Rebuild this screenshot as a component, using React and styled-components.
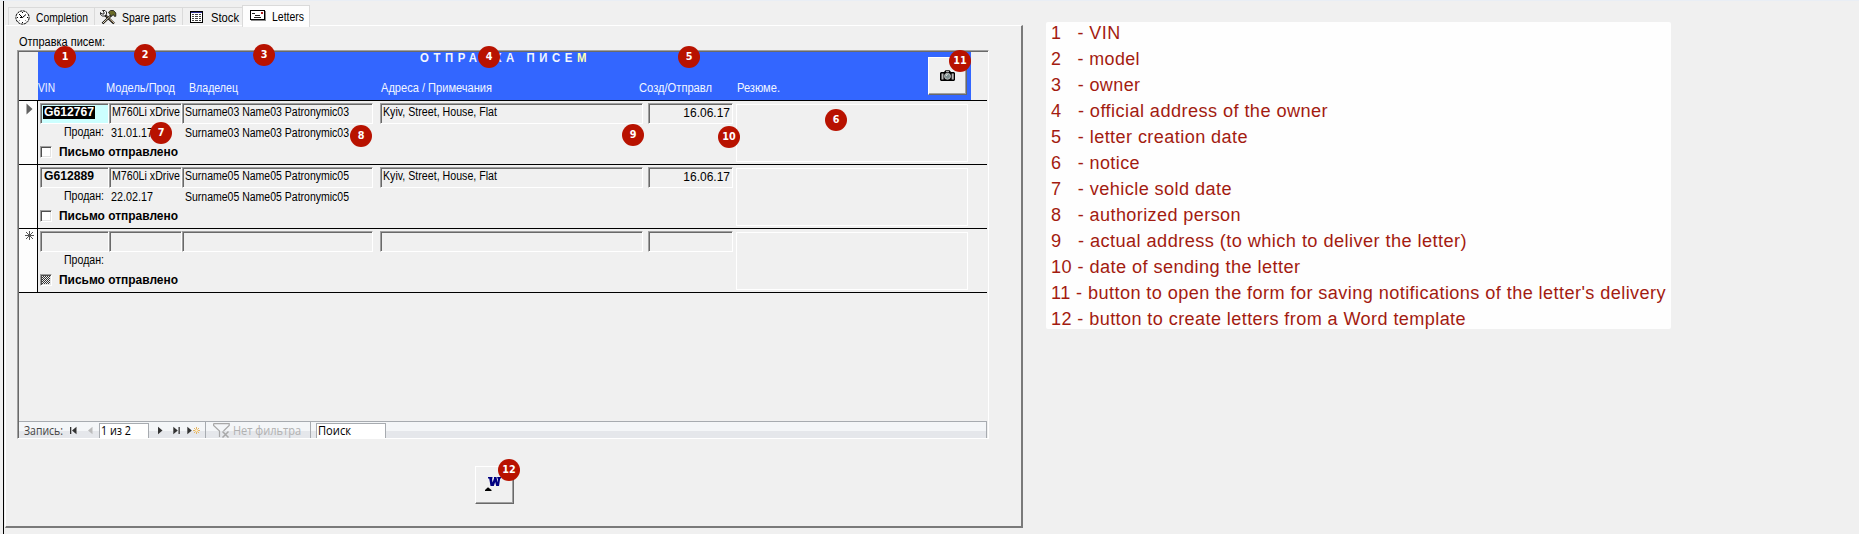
import React, { useLayoutEffect, useRef, useState } from "react";
import styled, { createGlobalStyle, css } from "styled-components";

const Global = createGlobalStyle`
  * { box-sizing: border-box; }
  body { margin: 0; background: #f0f0f0; overflow: hidden; }
  svg { display: block; flex: none; }
`;

const Page = styled.div`
  position: relative;
  width: 1859px;
  height: 534px;
  display: flex;
  align-items: flex-start;
  background: #f0f0f0;
  border-top: 1px solid #e9eef5;
  font: 12.5px/16px "Liberation Sans", Arial, sans-serif;
  color: #000;
  overflow: hidden;
`;

const FormWindow = styled.div`
  width: 1023px;
  height: 533px;
  margin-left: 3px;
  border-left: 1px solid #000;
  padding-left: 1px;
`;

/* Text squeezed or stretched horizontally to an exact width */
const FitBox = styled.span`
  display: block;
  flex: none;
  width: ${(p) => p.$width}px;
  margin-left: ${(p) => p.$left || 0}px;
  margin-top: ${(p) => p.$top || 0}px;
  white-space: pre;
`;
const FitInner = styled.span`
  display: inline-block;
  vertical-align: top;
  transform-origin: 0 50%;
`;

function Fit({ width, left, top, className, children }) {
  const ref = useRef(null);
  const [scale, setScale] = useState(1);
  useLayoutEffect(() => {
    const natural = ref.current.getBoundingClientRect().width / scale;
    if (natural) setScale(width / natural);
  }, [width]);
  return (
    <FitBox $width={width} $left={left} $top={top} className={className}>
      <FitInner ref={ref} style={{ transform: `scaleX(${scale})` }}>
        {children}
      </FitInner>
    </FitBox>
  );
}

const TabStrip = styled.div`
  display: flex;
  align-items: flex-end;
  height: 24px;
  padding-left: 3px;
`;
const Tab = styled.div`
  display: flex;
  width: ${(p) => p.$width}px;
  height: 18px;
  padding: 2px 0 0 ${(p) => p.$pad}px;
  border-left: 1px solid #dadada;
  border-top: 1px solid #dadada;
  ${(p) =>
    p.$active &&
    css`
      position: relative;
      height: 22px;
      margin-bottom: -2px;
      padding-top: 3px;
      background: #fdfdfd;
      border-right: 1px solid #dadada;
    `}
`;

const Panel = styled.div`
  width: 1018px;
  height: 503px;
  border: 1px solid #fff;
  border-right: 2px solid #7a7a7a;
  border-bottom: 2px solid #7a7a7a;
  padding: 8px 0 0 11px;
`;

const Subform = styled.div`
  width: 972px;
  height: 389px;
  display: flex;
  flex-direction: column;
  border: 1px solid #fff;
  border-top: 1px solid #a0a0a0;
  border-left: 1px solid #a0a0a0;
  box-shadow: inset 1px 1px 0 #696969;
  padding: 1px 0 0 1px;
`;

const HeaderRow = styled.div`
  display: flex;
  flex: none;
  height: 49px;
  padding-left: 19px;
  width: 968px;
  border-bottom: 1px solid #000;
`;
const HeaderBand = styled.div`
  display: flex;
  width: 933px;
  height: 48px;
  background: #3366ff;
  color: #f2f6ff;
`;
const HeaderLabels = styled.div`
  width: 890px;
`;
const Title = styled(Fit)`
  font-weight: bold;
  font-size: 12.5px;
  line-height: 16px;
  letter-spacing: 5px;
`;
const LastLetter = styled.span`
  color: #ffffb0;
`;
const LabelLine = styled.div`
  display: flex;
  margin-top: 14px;
`;

const raised = css`
  background: #f0f0f0;
  border-top: 1px solid #fff;
  border-left: 1px solid #fff;
  border-right: 1px solid #696969;
  border-bottom: 1px solid #696969;
  box-shadow: inset -1px -1px 0 #a0a0a0;
`;
const IconButton = styled.button`
  ${raised}
  display: grid;
  width: 39px;
  height: 38px;
  padding: ${(p) => p.$pad};
  margin: ${(p) => p.$margin};
`;

const Record = styled.div`
  display: flex;
  flex: none;
  width: 968px;
  height: 64px;
  border-bottom: 1px solid #000;
`;
const Selector = styled.div`
  width: 18px;
  padding: 2px 0 0 ${(p) => (p.$isNew ? 6 : 7)}px;
  background: #fdfdfd;
`;
const RecordBody = styled.div`
  display: grid;
  grid-template-columns: 69px 73px 198px 268px 88px 232px;
  grid-template-rows: 21px 20px 19px;
  width: 950px;
  border-left: 1px solid #000;
  padding: 2px 0 0 2px;
`;
const Field = styled.div`
  height: 21px;
  width: ${(p) => p.$width}px;
  border: 1px solid #fff;
  border-top-color: #a0a0a0;
  border-left-color: #a0a0a0;
  box-shadow: inset 1px 1px 0 #696969;
  background: ${(p) => (p.$current ? "#ccffff" : "transparent")};
  font-weight: ${(p) => (p.$bold ? "bold" : "normal")};
  padding: 0 0 0 2px;
`;
const Selected = styled.div`
  width: 52px;
  height: 13px;
  margin-top: 2px;
  background: #000;
  color: #fff;
  line-height: 12px;
`;
const DateText = styled.div`
  font-size: 12px;
  line-height: 18px;
  text-align: right;
  padding-right: 2px;
`;
const Notice = styled.div`
  grid-column: 6;
  grid-row: 1 / 4;
  height: 58px;
  margin-top: 1px;
  border: 1px solid #fff;
`;
const CheckLine = styled.div`
  grid-column: 1 / 4;
  display: flex;
  font-weight: bold;
  font-size: 12px;
`;
const CheckBox = styled.div`
  width: 12px;
  height: 12px;
  margin-top: 2px;
  border: 1px solid #fff;
  border-top-color: #a0a0a0;
  border-left-color: #a0a0a0;
  box-shadow: inset 1px 1px 0 #505050, inset -1px -1px 0 #e3e3e3;
  background: ${(p) =>
    p.$mixed
      ? "repeating-conic-gradient(#333 0 25%, #eee 0 50%) 1px 1px / 2px 2px"
      : "#fff"};
`;

const Spacer = styled.div`
  flex: 1;
`;
const NavBar = styled.div`
  display: flex;
  flex: none;
  width: 968px;
  height: 17px;
  border-top: 1px solid #a7abb0;
  border-right: 1px solid #a7abb0;
  background: linear-gradient(#f4f6f8 0 9px, #e5e7eb 9px);
  font: 12px/17px "Open Sans", "Noto Sans", sans-serif;
  color: #444;
`;
const NavIcon = styled.div`
  margin: 4px 0 0 ${(p) => p.$left}px;
`;
const NavInput = styled.div`
  width: ${(p) => p.$width}px;
  height: 15px;
  margin: 1px 0 0 ${(p) => p.$left}px;
  border: 1px solid #a7abb0;
  border-bottom: 0;
  background: #fff;
  color: #000;
  line-height: 14px;
`;
const NavRule = styled.div`
  width: 1px;
  height: 16px;
  margin-left: ${(p) => p.$left}px;
  background: #a7abb0;
`;
const Muted = styled.div`
  color: #b1b1b1;
`;

const Legend = styled.div`
  width: 625px;
  height: 307px;
  margin: 21px 0 0 20px;
  padding: 0 0 0 5px;
  background: #fefefe;
  border-radius: 2px;
  color: #a31b10;
  font-size: 17.6px;
  line-height: 26px;
  letter-spacing: 0.4px;
  & > :first-child { margin-top: -2px; }
`;

const Badge = styled.div`
  position: absolute;
  left: ${(p) => p.$x - 11}px;
  top: ${(p) => p.$y - 12}px;
  width: 22px;
  height: 22px;
  border-radius: 50%;
  background: #b81200;
  color: #fff;
  text-align: center;
  font: bold 11px/22px "DejaVu Sans", sans-serif;
`;
const BadgeNumber = styled.span`
  display: block;
  transform: scaleX(0.88);
`;

const IconSlot = styled.div`
  padding-top: 1px;
`;
const FunnelSlot = styled.div`
  padding: 1px 0 0 7px;
`;

const ClockIcon = () => (
  <svg width="15" height="15" viewBox="0 0 15 15" fill="none" stroke="#000">
    <circle cx="7.5" cy="7.5" r="6.6" fill="#fff" strokeWidth="1" strokeDasharray="2.5 .6" />
    <path d="M4 4L7.5 7.5L11 4.5M7.5 7.5H5" strokeWidth="1" />
    <path d="M7.5 2v1M7.5 12v1M2 7.5h1M12 7.5h1M3.8 11.2l.6-.6M11.2 11.2l-.6-.6" strokeWidth="1" />
  </svg>
);
const ToolsIcon = () => (
  <svg width="17" height="15" viewBox="0 0 17 15">
    <path d="M5 5L14 13.5" stroke="#000" strokeWidth="2.4" />
    <path d="M6.5 6.2L14 13" stroke="#e2c79a" strokeWidth="1" />
    <path d="M2.500 13.500L11 5.500" stroke="#000" strokeWidth="2.4" />
    <path d="M3 13L10.500 6" stroke="#f0e6c4" strokeWidth="1" />
    <path d="M.5 2.5L2 4H4V2L2.500 .5H5L6.500 2V4L5 6H2.500L.5 4.500Z" fill="#fff" stroke="#111" strokeWidth=".9" />
    <path d="M8.500 2.200L10.500 .5H13.500L15.800 3V6.300L14.300 6.300L13.300 4.500L11.500 6.300L10 4.500Z" fill="#6b6b28" stroke="#111" strokeWidth=".8" />
  </svg>
);
const TableIcon = () => (
  <svg width="13" height="12" viewBox="0 0 13 12" shapeRendering="crispEdges">
    <path d="M0 0h13v12h-13z" fill="#000" />
    <path d="M1 1h11v10h-11z" fill="#fff" />
    <path d="M1 1h11v1h-11z" fill="#303090" />
    <path d="M2 3h2v1h-2zM5 3h3v1h-3zM9 3h2v1h-2zM2 5h2v1h-2zM5 5h3v1h-3zM9 5h2v1h-2zM2 7h2v1h-2zM5 7h3v1h-3zM9 7h2v1h-2zM2 9h2v1h-2zM5 9h3v1h-3zM9 9h2v1h-2z" fill="#444" />
  </svg>
);
const EnvelopeIcon = () => (
  <svg width="16" height="11" viewBox="0 0 16 11" shapeRendering="crispEdges">
    <path d="M.5 .5h14v9h-14z" fill="#fff" stroke="#000" />
    <path d="M15.5 1v9.5H1" stroke="#888" fill="none" />
    <path d="M2 3h3v1h-3zM5 5h5v1h-5zM4 7h7v1h-7z" fill="#222" />
    <path d="M11 2h2v2h-2z" fill="#b02020" />
  </svg>
);
const CameraIcon = () => (
  <svg width="15" height="11" viewBox="0 0 15 11">
    <path d="M0 3L1 2H4L5.5 .3H9.5L11 2H14L15 3V10L14 11H1L0 10Z" fill="#000" />
    <path d="M1.500 3.500h2v6h-2zM11.700 3.500h2v6h-2z" fill="#b8b8b8" />
    <path d="M6 1.200h3v1h-3z" fill="#d8d8d8" />
    <circle cx="7.500" cy="6.300" r="3" fill="#7f9090" stroke="#d0d0d0" strokeWidth=".8" />
    <path d="M6 5.500l1.500-1" stroke="#fff" />
  </svg>
);
const WordIcon = () => (
  <svg width="17" height="15" viewBox="0 0 17 15">
    <path d="M3 0H7.500V1.500H7L7.500 5.500L9 1.500V0H11.500L12.500 5.500L13 1.500H12.200V0H16V1.500H15.200L14 9H11.200L10.200 5L8.800 9H5.500L4.200 1.500H3Z" fill="#000080" />
    <path d="M0 14V13L3 10.300L6.500 13V14Z" fill="#000" />
  </svg>
);
const CurrentIcon = () => (
  <svg width="7" height="12" viewBox="0 0 7 12">
    <path d="M.5 0.500L6.500 6L.5 11.500Z" fill="#636363" />
  </svg>
);
const NewRecordIcon = () => (
  <svg width="9" height="9" viewBox="0 0 9 9" stroke="#555" strokeWidth="1">
    <path d="M4.500 0V9M0 4.500H9M1 1L8 8M8 1L1 8" />
  </svg>
);
const NavGlyph = ({ kind }) => (
  <svg width={kind === "new" ? 14 : 7} height="9" viewBox={kind === "new" ? "0 0 14 9" : "0 0 7 9"}>
    {kind === "first" && <path d="M0 1h1.300v7H0zM6.500 .8v7.400L2 4.500z" fill="#333" />}
    {kind === "prev" && <path d="M5.500 .8v7.400L1 4.500z" fill="#bbb" />}
    {kind === "next" && <path d="M1 .8v7.400L5.500 4.500z" fill="#333" />}
    {kind === "last" && <path d="M5.500 1h1.300v7H5.500zM.3 .8v7.400L4.800 4.500z" fill="#333" />}
    {kind === "new" && (
      <>
        <path d="M.3 .8v7.400L4.800 4.500z" fill="#333" />
        <path d="M9.500 1v7M6 4.500h7M7 2l5 5M12 2l-5 5" stroke="#e5b565" />
        <circle cx="9.500" cy="4.500" r="1.300" fill="#fff3d0" />
      </>
    )}
  </svg>
);
const FunnelIcon = () => (
  <svg width="17" height="15" viewBox="0 0 17 15" fill="none" stroke="#a8a8a8" strokeWidth="1.200">
    <path d="M.6 .6H16.200V2.500L10.500 8M.6 .6V2.500L6.500 8V14" />
    <path d="M9.500 8.500L15.500 14.500M15.500 8.500L9.500 14.500" strokeWidth="1.500" />
  </svg>
);

const records = [
  { vin: "G612767", model: "M760Li xDrive", owner: "Surname03 Name03 Patronymic03", address: "Kyiv, Street, House, Flat", date: "16.06.17", sold: "31.01.17", current: true },
  { vin: "G612889", model: "M760Li xDrive", owner: "Surname05 Name05 Patronymic05", address: "Kyiv, Street, House, Flat", date: "16.06.17", sold: "22.02.17" },
  { isNew: true },
];

function RecordRow({ r }) {
  return (
    <Record>
      <Selector $isNew={r.isNew}>
        {r.current && <CurrentIcon />}
        {r.isNew && <NewRecordIcon />}
      </Selector>
      <RecordBody>
        <Field $width={69} $current={r.current} $bold>
          {r.vin &&
            (r.current ? (
              <Selected><Fit width={50} left={1}>{r.vin}</Fit></Selected>
            ) : (
              <Fit width={50} left={1}>{r.vin}</Fit>
            ))}
        </Field>
        <Field $width={73}>{r.model && <Fit width={68}>{r.model}</Fit>}</Field>
        <Field $width={191}>{r.owner && <Fit width={164}>{r.owner}</Fit>}</Field>
        <Field $width={263}>{r.address && <Fit width={114}>{r.address}</Fit>}</Field>
        <Field $width={85}><DateText>{r.date}</DateText></Field>
        <Notice />
        <Fit width={40} left={24}>Продан:</Fit>
        {r.sold ? <Fit width={42} left={2} top={1}>{r.sold}</Fit> : <span />}
        {r.owner ? <Fit width={164} left={3} top={1}>{r.owner}</Fit> : <span />}
        <span />
        <span />
        <CheckLine>
          <CheckBox $mixed={r.isNew} />
          <Fit width={119} left={7}>Письмо отправлено</Fit>
        </CheckLine>
      </RecordBody>
    </Record>
  );
}

const legend = [
  ["1   - VIN", 69.5],
  ["2   - model", 89],
  ["3   - owner", 89.5],
  ["4   - official address of the owner", 277],
  ["5   - letter creation date", 197],
  ["6   - notice", 89],
  ["7   - vehicle sold date", 181],
  ["8   - authorized person", 190],
  ["9   - actual address (to which to deliver the letter)", 416],
  ["10 - date of sending the letter", 249.5],
  ["11 - button to open the form for saving notifications of the letter's delivery", 615],
  ["12 - button to create letters from a Word template", 415],
];

const badges = [
  [65, 57], [145, 55], [264, 55], [489, 57], [689, 57], [836, 120],
  [161, 133], [361, 136], [633, 135], [729, 137], [960, 61], [509, 470],
];

export default function App() {
  return (
    <Page>
      <Global />
      <FormWindow>
        <TabStrip>
          <Tab $width={86} $pad={6}><ClockIcon /><Fit width={52} left={6}>Completion</Fit></Tab>
          <Tab $width={88} $pad={5}><ToolsIcon /><Fit width={54} left={5}>Spare parts</Fit></Tab>
          <Tab $width={60} $pad={7}><IconSlot><TableIcon /></IconSlot><Fit width={28} left={8}>Stock</Fit></Tab>
          <Tab $width={68} $pad={7} $active><IconSlot><EnvelopeIcon /></IconSlot><Fit width={32} left={6}>Letters</Fit></Tab>
        </TabStrip>
        <Panel>
          <Fit width={86} left={2}>Отправка писем:</Fit>
          <Subform>
            <HeaderRow>
              <HeaderBand>
                <HeaderLabels>
                  <Title width={171} left={382} top={-2}>
                    ОТПРАВКА ПИСЕ<LastLetter>М</LastLetter>
                  </Title>
                  <LabelLine>
                    <Fit width={17}>VIN</Fit>
                    <Fit width={69} left={51}>Модель/Прод</Fit>
                    <Fit width={49} left={14}>Владелец</Fit>
                    <Fit width={111} left={143}>Адреса / Примечания</Fit>
                    <Fit width={73} left={147}>Созд/Отправл</Fit>
                    <Fit width={43} left={25}>Резюме.</Fit>
                  </LabelLine>
                </HeaderLabels>
                <IconButton $margin="5px 0 0" $pad="12px 0 0 11px"><CameraIcon /></IconButton>
              </HeaderBand>
            </HeaderRow>
            {records.map((r, i) => <RecordRow key={i} r={r} />)}
            <Spacer />
            <NavBar>
              <Fit width={39} left={5}>Запись:</Fit>
              <NavIcon $left={7}><NavGlyph kind="first" /></NavIcon>
              <NavIcon $left={10}><NavGlyph kind="prev" /></NavIcon>
              <NavInput $left={5} $width={50}><Fit width={30} left={1}>1 из 2</Fit></NavInput>
              <NavIcon $left={8}><NavGlyph kind="next" /></NavIcon>
              <NavIcon $left={9}><NavGlyph kind="last" /></NavIcon>
              <NavIcon $left={7}><NavGlyph kind="new" /></NavIcon>
              <NavRule $left={4} />
              <FunnelSlot><FunnelIcon /></FunnelSlot>
              <Muted><Fit width={68} left={3}>Нет фильтра</Fit></Muted>
              <NavRule $left={9} />
              <NavInput $left={5} $width={70}><Fit width={33} left={1}>Поиск</Fit></NavInput>
            </NavBar>
          </Subform>
          <IconButton $margin="27px 0 0 458px" $pad="10px 0 0 9px"><WordIcon /></IconButton>
        </Panel>
      </FormWindow>
      <Legend>
        {legend.map(([text, width]) => <Fit key={text} width={width}>{text}</Fit>)}
      </Legend>
      {badges.map(([x, y], i) => (
        <Badge key={i} $x={x} $y={y}><BadgeNumber>{i + 1}</BadgeNumber></Badge>
      ))}
    </Page>
  );
}
